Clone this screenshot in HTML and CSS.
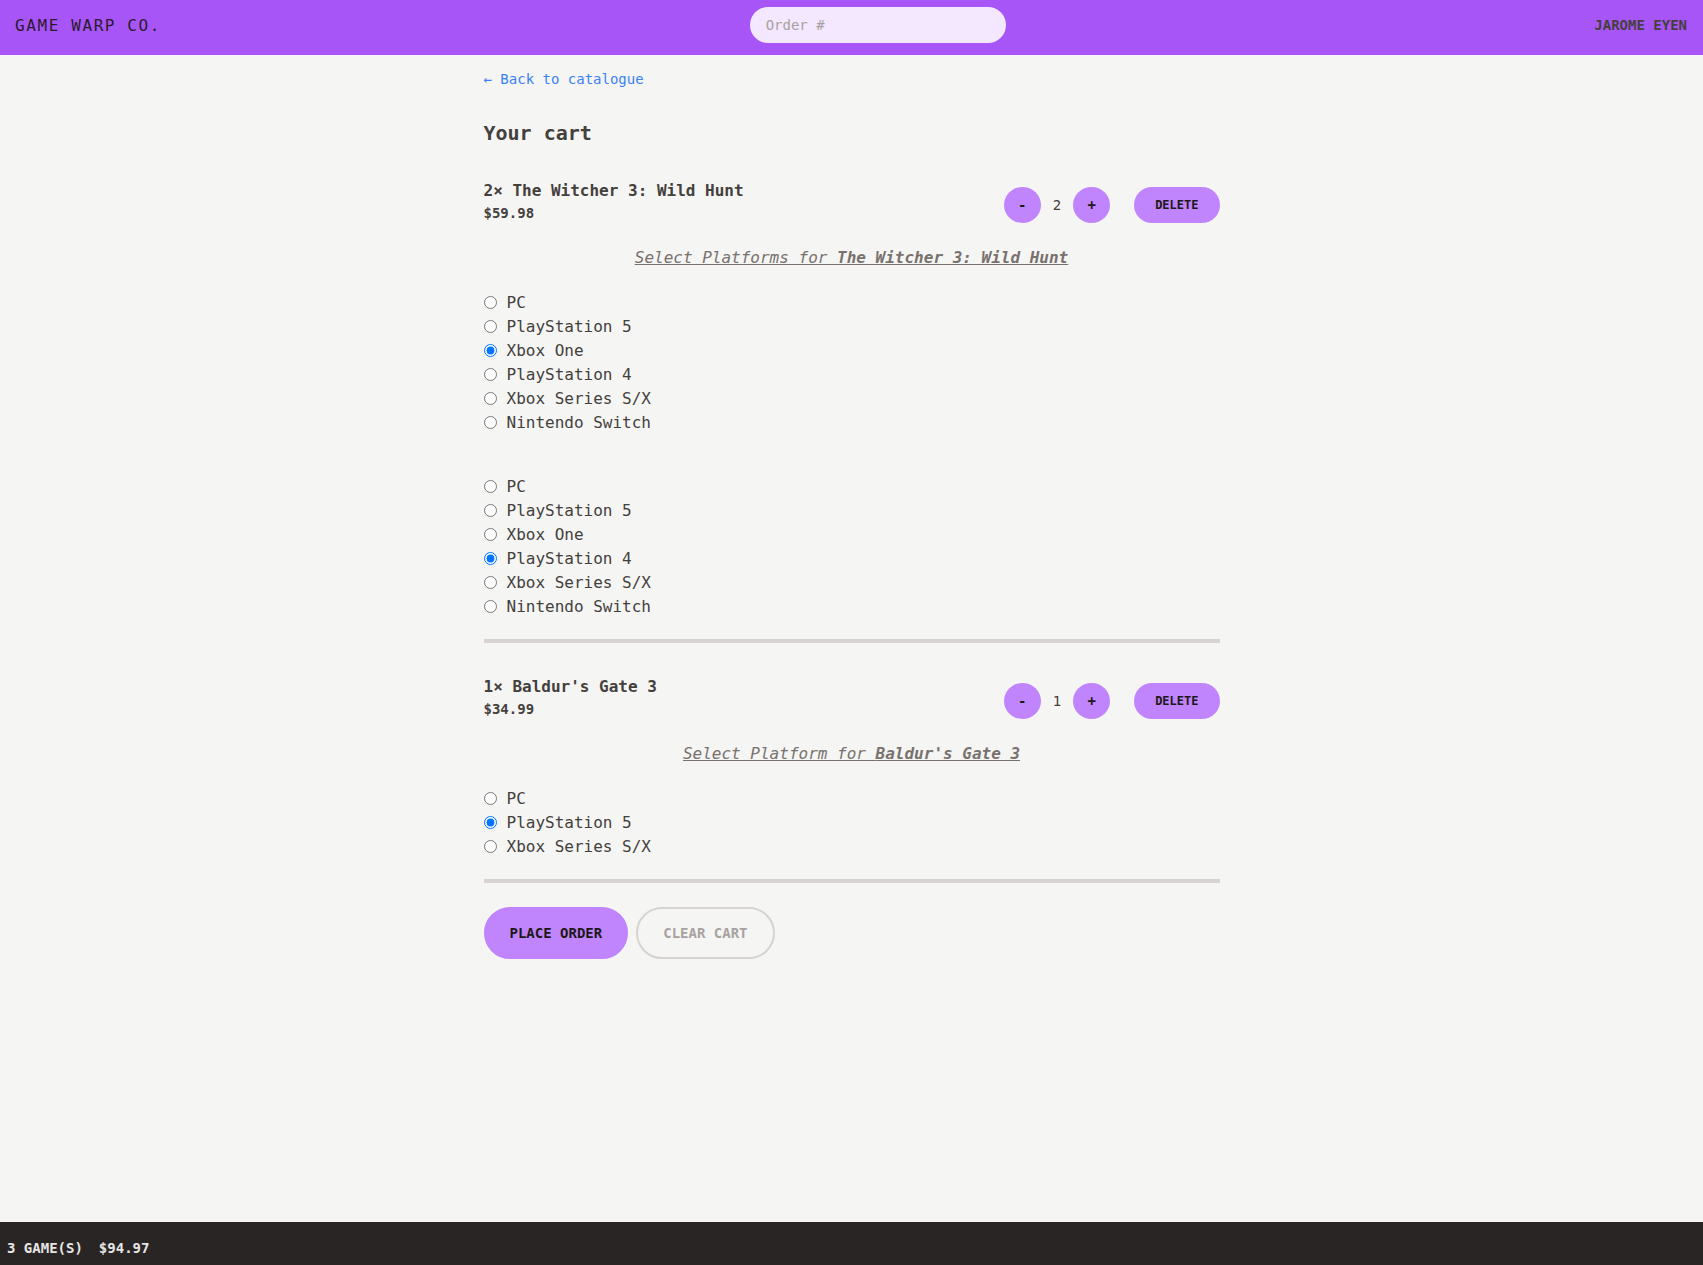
FILE: index.html
```html
<!DOCTYPE html>
<html lang="en">
<head>
<meta charset="utf-8">
<title>Your cart — Game Warp Co.</title>
<link rel="stylesheet" href="styles.css">
</head>
<body>
<header class="topbar">
  <div class="logo">GAME WARP CO.</div>
  <input class="order-search" type="text" placeholder="Order #">
  <div class="user">JAROME EYEN</div>
</header>

<main class="page">
  <a class="back" href="#">← Back to catalogue</a>
  <h1 class="title">Your cart</h1>

  <section class="item">
    <div class="item-head">
      <div class="item-info">
        <div class="item-name">2× The Witcher 3: Wild Hunt</div>
        <div class="item-price">$59.98</div>
      </div>
      <div class="item-controls">
        <button class="circle">-</button>
        <span class="qty">2</span>
        <button class="circle">+</button>
        <button class="delete">DELETE</button>
      </div>
    </div>
    <div class="platform-heading">Select Platforms for <b>The Witcher 3: Wild Hunt</b></div>
    <div class="radio-group">
      <label class="radio"><input type="radio" name="w1">PC</label>
      <label class="radio"><input type="radio" name="w1">PlayStation 5</label>
      <label class="radio"><input type="radio" name="w1" checked>Xbox One</label>
      <label class="radio"><input type="radio" name="w1">PlayStation 4</label>
      <label class="radio"><input type="radio" name="w1">Xbox Series S/X</label>
      <label class="radio"><input type="radio" name="w1">Nintendo Switch</label>
    </div>
    <div class="radio-group second">
      <label class="radio"><input type="radio" name="w2">PC</label>
      <label class="radio"><input type="radio" name="w2">PlayStation 5</label>
      <label class="radio"><input type="radio" name="w2">Xbox One</label>
      <label class="radio"><input type="radio" name="w2" checked>PlayStation 4</label>
      <label class="radio"><input type="radio" name="w2">Xbox Series S/X</label>
      <label class="radio"><input type="radio" name="w2">Nintendo Switch</label>
    </div>
  </section>

  <section class="item">
    <div class="item-head">
      <div class="item-info">
        <div class="item-name">1× Baldur's Gate 3</div>
        <div class="item-price">$34.99</div>
      </div>
      <div class="item-controls">
        <button class="circle">-</button>
        <span class="qty">1</span>
        <button class="circle">+</button>
        <button class="delete">DELETE</button>
      </div>
    </div>
    <div class="platform-heading">Select Platform for <b>Baldur's Gate 3</b></div>
    <div class="radio-group">
      <label class="radio"><input type="radio" name="b1">PC</label>
      <label class="radio"><input type="radio" name="b1" checked>PlayStation 5</label>
      <label class="radio"><input type="radio" name="b1">Xbox Series S/X</label>
    </div>
  </section>

  <div class="actions">
    <button class="btn primary">PLACE ORDER</button>
    <button class="btn outline">CLEAR CART</button>
  </div>
</main>

<footer class="cartbar">
  <span>3 GAME(S)</span>
  <span>$94.97</span>
</footer>
</body>
</html>
```

FILE: styles.css
```css
* { box-sizing: border-box; }

html, body { margin: 0; padding: 0; }

body {
  min-height: 100vh;
  display: flex;
  flex-direction: column;
  background: #f5f5f4;
  color: #44403c;
  font-family: "DejaVu Sans Mono", "Liberation Mono", monospace;
  font-size: 16px;
}

.topbar {
  height: 55px;
  flex: none;
  display: flex;
  align-items: center;
  justify-content: space-between;
  padding: 0 16px 5px 15px;
  background: #a855f7;
}

.logo {
  font-size: 16px;
  letter-spacing: 0.1em;
  color: #2a1b2e;
}

.order-search {
  width: 256px;
  height: 36px;
  border: none;
  border-radius: 9999px;
  background: #f3e8ff;
  padding: 0 16px;
  font-family: inherit;
  font-size: 14px;
  color: #44403c;
  outline: none;
}
.order-search::placeholder { color: #a8a29e; }

.user {
  font-size: 14px;
  font-weight: bold;
  color: #44403c;
}

.page {
  flex: 1;
  width: 736px;
  margin: 0 auto;
  padding-top: 14px;
}

.back {
  display: block;
  font-size: 14px;
  line-height: 20px;
  color: #3b82f6;
  text-decoration: none;
}

.title {
  margin: 30px 0 0;
  font-size: 20px;
  line-height: 28px;
  font-weight: bold;
  color: #44403c;
}

.item {
  padding: 32px 0 21px;
  border-bottom: 4px solid #d6d3d1;
}

.item-head {
  display: flex;
  justify-content: space-between;
  align-items: flex-end;
}

.item-name {
  font-size: 16px;
  line-height: 24px;
  font-weight: bold;
}

.item-price {
  font-size: 14px;
  line-height: 20px;
  font-weight: bold;
}

.item-controls {
  display: flex;
  align-items: center;
  gap: 12px;
}

.circle {
  width: 37px;
  height: 36px;
  border: none;
  border-radius: 50%;
  background: #c084fc;
  color: #1c1917;
  font-family: inherit;
  font-size: 14px;
  font-weight: bold;
  padding: 0;
}

.qty {
  font-size: 14px;
  line-height: 20px;
  color: #44403c;
}

.delete {
  margin-left: 12px;
  height: 36px;
  padding: 0 21px;
  border: none;
  border-radius: 9999px;
  background: #c084fc;
  color: #1c1917;
  font-family: inherit;
  font-size: 12px;
  font-weight: bold;
}

.platform-heading {
  margin-top: 23px;
  text-align: center;
  font-style: italic;
  text-decoration: underline;
  font-size: 16px;
  line-height: 24px;
  color: #78716c;
}

.radio-group {
  margin-top: 20px;
  display: flex;
  flex-direction: column;
}
.radio-group.second { margin-top: 40px; }

.radio {
  display: flex;
  align-items: center;
  height: 24px;
  font-size: 16px;
  color: #44403c;
}
.radio input {
  width: 13px;
  height: 13px;
  margin: 0 10px 0 0;
}

.actions {
  margin-top: 24px;
  display: flex;
  gap: 8px;
}

.btn {
  height: 52px;
  padding: 0 24px;
  border-radius: 9999px;
  font-family: inherit;
  font-size: 14px;
  font-weight: bold;
}
.btn.primary {
  background: #c084fc;
  border: 2px solid #c084fc;
  color: #1c1917;
}
.btn.outline {
  padding: 0 25px;
  background: transparent;
  border: 2px solid #d6d3d1;
  color: #a8a29e;
}

.cartbar {
  height: 43px;
  flex: none;
  display: flex;
  gap: 16px;
  padding: 16px 7px 0;
  background: #292524;
  color: #e7e5e4;
  font-size: 14px;
  line-height: 20px;
  font-weight: bold;
}
```
